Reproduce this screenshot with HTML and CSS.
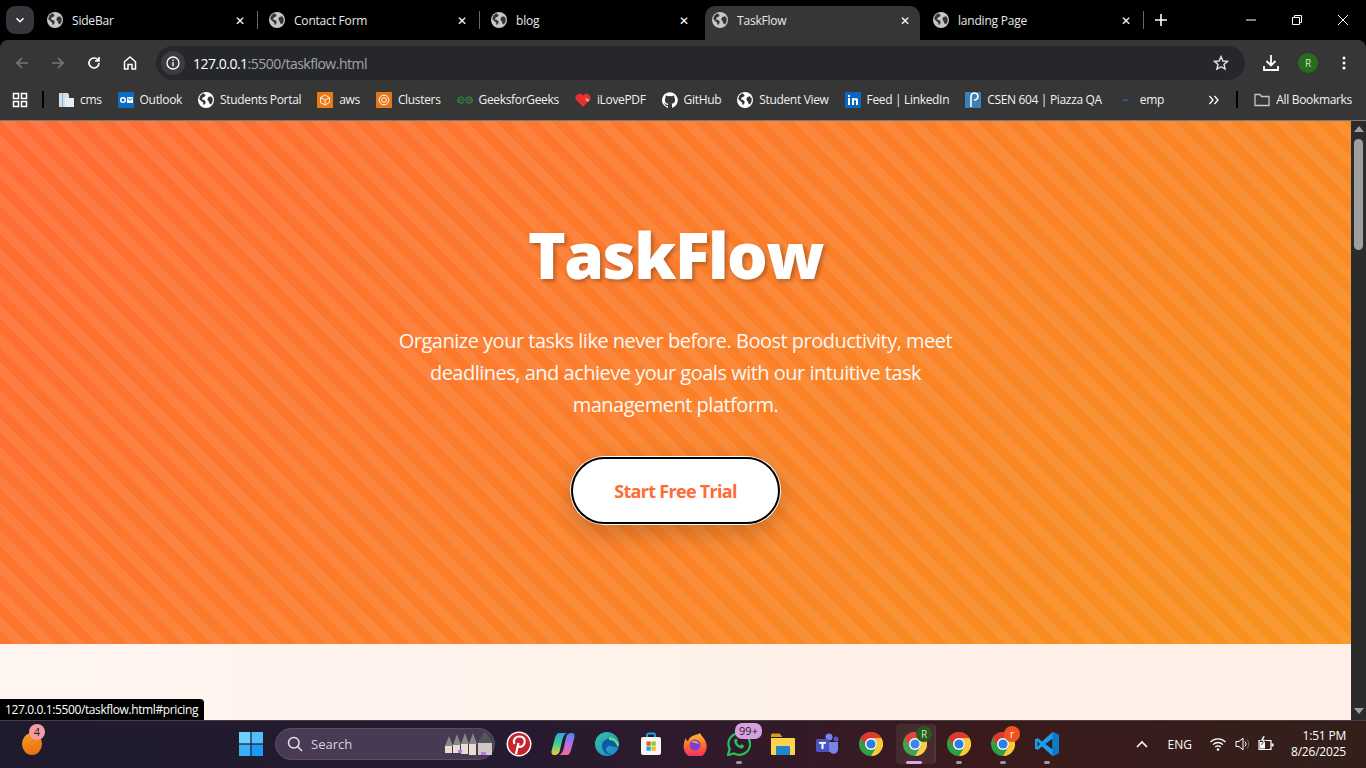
FILE: index.html
```html
<!DOCTYPE html>
<html lang="en">
<head>
    <meta charset="UTF-8">
    <meta name="viewport" content="width=device-width, initial-scale=1.0">
    <title>TaskFlow</title>
    <link rel="stylesheet" href="styles.css">
</head>
<body>
    <svg class="defs" width="0" height="0">
        <symbol id="globe" viewBox="0 0 16 16">
            <circle cx="8" cy="8" r="8" fill="currentColor"/>
            <path d="M5.2 1.3 7.6 3 7 4.6 4.7 5.6 4 7.6 6 8 7.6 9.2 7.4 11.4 5.8 13.2 5 10.6 2.6 8.6 1.2 6.8 2.4 3.4z" fill="#35363a"/>
            <path d="M10.4 5 13 4.2 14.7 6.6 14.6 9.6 13 12.4 11.4 11.6 10.6 9.2 9.2 7.4z" fill="#35363a"/>
        </symbol>
        <symbol id="chrome" viewBox="0 0 24 24">
            <circle cx="12" cy="12" r="12" fill="#2f9e48"/>
            <path d="M22.4 6A12 12 0 0 1 12 24l5-8.6A6 6 0 0 0 12 6z" fill="#fcc934"/>
            <path d="M1.6 6A12 12 0 0 1 22.4 6H12a6 6 0 0 0-5.2 9z" fill="#e0382f"/>
            <circle cx="12" cy="12" r="6" fill="#fff"/>
            <circle cx="12" cy="12" r="4.6" fill="#2f7ee8"/>
        </symbol>
    </svg>

    <!-- tab strip -->
    <div class="tabstrip">
        <div class="tab-search">
            <svg width="10" height="10" viewBox="0 0 10 10"><path d="M1.5 3.2 5 6.7l3.5-3.5" fill="none" stroke="#fff" stroke-width="1.6"/></svg>
        </div>
        <div class="tab"><svg class="fav"><use href="#globe"/></svg><span class="tab-title">SideBar</span><span class="tab-x">✕</span></div>
        <i class="tab-sep"></i>
        <div class="tab"><svg class="fav"><use href="#globe"/></svg><span class="tab-title">Contact Form</span><span class="tab-x">✕</span></div>
        <i class="tab-sep"></i>
        <div class="tab"><svg class="fav"><use href="#globe"/></svg><span class="tab-title">blog</span><span class="tab-x">✕</span></div>
        <div class="tab active"><svg class="fav"><use href="#globe"/></svg><span class="tab-title">TaskFlow</span><span class="tab-x">✕</span></div>
        <div class="tab last"><svg class="fav"><use href="#globe"/></svg><span class="tab-title">landing Page</span><span class="tab-x">✕</span></div>
        <i class="tab-sep"></i>
        <svg class="newtab" width="12" height="12" viewBox="0 0 12 12"><path d="M6 0v12M0 6h12" stroke="#fff" stroke-width="1.6"/></svg>
        <div class="win-controls">
            <svg width="12" height="12" viewBox="0 0 12 12"><path d="M1 6h10" stroke="#fff"/></svg>
            <svg width="12" height="12" viewBox="0 0 12 12"><path d="M1.5 3.5h7v7h-7zM3.5 3.5v-2h7v7h-2" fill="none" stroke="#fff"/></svg>
            <svg width="12" height="12" viewBox="0 0 12 12"><path d="M1 1l10 10M11 1 1 11" stroke="#fff"/></svg>
        </div>
    </div>

    <!-- toolbar -->
    <div class="toolbar">
        <svg class="tool" viewBox="0 0 16 16"><path d="M14 8H3M8 3 3 8l5 5" fill="none" stroke="#77797c" stroke-width="1.6"/></svg>
        <svg class="tool" viewBox="0 0 16 16"><path d="M2 8h11M8 3l5 5-5 5" fill="none" stroke="#77797c" stroke-width="1.6"/></svg>
        <svg class="tool" viewBox="0 0 16 16"><path d="M13 8a5 5 0 1 1-1.5-3.6L13 6M13 2v4H9" fill="none" stroke="#fff" stroke-width="1.6"/></svg>
        <svg class="tool" viewBox="0 0 16 16"><path d="M2.5 14V6.8L8 2l5.5 4.8V14H10V9.5H6V14z" fill="none" stroke="#fff" stroke-width="1.5"/></svg>
        <div class="omnibox">
            <span class="site-info"><svg width="14" height="14" viewBox="0 0 14 14"><circle cx="7" cy="7" r="6" fill="none" stroke="#fff" stroke-width="1.3"/><path d="M7 6v4.2M7 3.6v1.3" stroke="#fff" stroke-width="1.3"/></svg></span>
            <span class="url"><b>127.0.0.1</b>:5500/taskflow.html</span>
            <svg class="star" width="16" height="16" viewBox="0 0 16 16"><path d="M8 1.6 9.9 6l4.7.4-3.6 3.1 1.100 4.600L8 11.700l-4.100 2.400L5 9.500 1.400 6.400 6.100 6z" fill="none" stroke="#e3e3e3" stroke-width="1.4"/></svg>
        </div>
        <svg class="tool dl" viewBox="0 0 18 18"><path d="M9 1v10M4.500 7 9 11.500 13.500 7M2 12v4h14v-4" fill="none" stroke="#fff" stroke-width="1.8"/></svg>
        <span class="avatar">R</span>
        <svg class="tool menu" viewBox="0 0 16 16"><circle cx="8" cy="3" r="1.5" fill="#fff"/><circle cx="8" cy="8" r="1.5" fill="#fff"/><circle cx="8" cy="13" r="1.5" fill="#fff"/></svg>
    </div>

    <!-- bookmarks bar -->
    <div class="bookmarks">
        <svg class="apps" width="16" height="16" viewBox="0 0 16 16"><path d="M1.5 1.5h5v5h-5zM9.500 1.500h5v5h-5zM1.500 9.500h5v5h-5zM9.500 9.500h5v5h-5z" fill="none" stroke="#fff" stroke-width="1.5"/></svg>
        <i class="bm-sep"></i>
        <a class="bm"><svg class="bm-icon" viewBox="0 0 16 16"><path d="M1 1h9l1 2v12H1z" fill="#cfe0ef"/><path d="M4 1h1v14H4z" fill="#8fb0cf"/><path d="M7 6h9v9H7z" fill="#e9edf0"/></svg>cms</a>
        <a class="bm"><svg class="bm-icon" viewBox="0 0 16 16"><path d="M0 0h16v16H0z" fill="#0f6cc6"/><circle cx="5" cy="8" r="2.3" fill="none" stroke="#fff" stroke-width="1.5"/><path d="M9 5h6v6H9z" fill="#fff"/><path d="M9.500 6 12 8.200 14.500 6" fill="none" stroke="#0f6cc6"/></svg>Outlook</a>
        <a class="bm"><svg class="bm-icon white"><use href="#globe"/></svg>Students Portal</a>
        <a class="bm"><svg class="bm-icon" viewBox="0 0 16 16"><path d="M0 0h16v16H0z" fill="#ec7a14"/><path d="M8 3l4.500 2.500v5L8 13l-4.500-2.500v-5zM3.500 5.500 8 8l4.500-2.500M8 8v5" fill="none" stroke="#fff" stroke-width=".9"/></svg>aws</a>
        <a class="bm"><svg class="bm-icon" viewBox="0 0 16 16"><path d="M0 0h16v16H0z" fill="#e5761a"/><circle cx="8" cy="8" r="4.8" fill="none" stroke="#fff"/><circle cx="8" cy="8" r="2.4" fill="none" stroke="#fff"/></svg>Clusters</a>
        <a class="bm"><svg class="bm-icon" viewBox="0 0 16 16"><path d="M8 8h7.500a3.500 3.500 0 0 1-6.400 1.500M8 8H.5a3.500 3.500 0 0 0 6.400 1.500M9.100 6.500A3.500 3.500 0 0 1 15 7M6.900 6.500A3.500 3.500 0 0 0 1 7" fill="none" stroke="#2f8d46" stroke-width="1.2"/></svg>GeeksforGeeks</a>
        <a class="bm"><svg class="bm-icon" viewBox="0 0 16 16"><path d="M8 15 1.200 8A4 4 0 0 1 8 3.600 4 4 0 0 1 14.800 8z" fill="#e5322d"/><path d="M10 6l5 2-3 2z" fill="#f4a6a3"/></svg>iLovePDF</a>
        <a class="bm"><svg class="bm-icon" viewBox="0 0 16 16"><path d="M8 .2a8 8 0 0 0-2.500 15.600c.4.1.5-.2.5-.4v-1.400c-2.200.5-2.700-1-2.700-1-.4-.9-.9-1.200-.9-1.200-.7-.5.100-.5.100-.5.800.1 1.200.8 1.200.8.700 1.200 1.900.9 2.300.7.100-.5.300-.9.500-1.100-1.800-.2-3.600-.9-3.600-4 0-.9.300-1.600.8-2.100-.1-.2-.4-1 .1-2.100 0 0 .7-.2 2.200.8a7.600 7.600 0 0 1 4 0c1.500-1 2.200-.8 2.200-.8.400 1.100.2 1.900.1 2.100.5.600.8 1.300.8 2.100 0 3.100-1.900 3.700-3.700 3.900.3.300.6.800.6 1.500v2.200c0 .2.100.5.600.4A8 8 0 0 0 8 .2z" fill="#fff"/></svg>GitHub</a>
        <a class="bm"><svg class="bm-icon white"><use href="#globe"/></svg>Student View</a>
        <a class="bm"><svg class="bm-icon" viewBox="0 0 16 16"><path d="M0 0h16v16H0z" fill="#0a66c2"/><path d="M3 6h2v7H3zM3 3h2v2H3zM7 6h2v1c1-1.500 4-1.500 4 1.500V13h-2V9c0-1.500-2-1.500-2 0v4H7z" fill="#fff"/></svg>Feed | LinkedIn</a>
        <a class="bm"><svg class="bm-icon" viewBox="0 0 16 16"><path d="M0 0h16v16H0z" fill="#3e7fb5"/><path d="M6 15V4.500a3.500 3.500 0 1 1 3 3.400" fill="none" stroke="#fff" stroke-width="1.6"/></svg>CSEN 604 | Piazza QA</a>
        <a class="bm"><svg class="bm-icon" viewBox="0 0 16 16"><path d="M5 7.500h5V9H5z" fill="#1f5fa8"/></svg>emp</a>
        <svg class="more" width="12" height="12" viewBox="0 0 12 12"><path d="M1.500 2 5 6 1.500 10M6.500 2 10 6l-3.500 4" fill="none" stroke="#fff" stroke-width="1.3"/></svg>
        <i class="bm-sep end"></i>
        <a class="bm all"><svg class="bm-icon" viewBox="0 0 16 16"><path d="M1 13.500v-11h5l1.500 2h7.500v9z" fill="none" stroke="#c7c7c7" stroke-width="1.3"/></svg>All Bookmarks</a>
    </div>

    <!-- page + scrollbar -->
    <div class="viewport">
        <main class="page">
            <section class="hero">
                <h1>TaskFlow</h1>
                <p>Organize your tasks like never before. Boost productivity, meet deadlines, and achieve your goals with our intuitive task management platform.</p>
                <a class="cta">Start Free Trial</a>
            </section>
            <section class="next-section"></section>
        </main>
        <div class="scrollbar">
            <i class="arrow up"></i>
            <div class="thumb"></div>
            <i class="arrow down"></i>
        </div>
        <div class="status-bubble">127.0.0.1:5500/taskflow.html#pricing</div>
    </div>

    <!-- windows taskbar -->
    <footer class="taskbar">
        <div class="tb-left">
            <span class="weather"><span class="weather-badge">4</span></span>
        </div>
        <div class="slot start">
            <svg width="24" height="24" viewBox="0 0 24 24"><path d="M0 0h11.400v11.400H0z" fill="#6fd0fb"/><path d="M12.600 0H24v11.400H12.600z" fill="#4fc0fa"/><path d="M0 12.600h11.400V24H0z" fill="#38b0f8"/><path d="M12.600 12.600H24V24H12.600z" fill="#1b9bf5"/></svg>
        </div>
        <div class="search">
            <svg width="16" height="16" viewBox="0 0 16 16"><circle cx="6.800" cy="6.800" r="5.300" fill="none" stroke="#e6e3ea" stroke-width="1.5"/><path d="M10.800 10.800 15 15" stroke="#e6e3ea" stroke-width="1.5"/></svg>
            <span>Search</span>
            <svg class="search-art" width="50" height="30" viewBox="0 0 50 30">
                <path d="M1 17h7v7H1zM9 16h7v8H9zM17 15h7v10h-7zM25 15h7v11h-7z" fill="#e7ddd3"/>
                <path d="M34 14h14v12H34z" fill="#cfc8c4"/>
                <path d="M1 17 5 7l4 10zM9 16l4-11 4 11zM17 15l4-11 4 11zM25 15l4-11 4 11z" fill="#87878b"/>
                <path d="M33 14l8-12 8 12z" fill="#54555c"/>
                <path d="M37 23h5v3h-5zM14 21h4v3h-4z" fill="#b77be0"/>
            </svg>
        </div>
        <div class="slot">
            <svg width="26" height="26" viewBox="0 0 26 26"><circle cx="13" cy="13" r="12.500" fill="#fff"/><circle cx="13" cy="13" r="11" fill="#c8232c"/><path d="M10 23c.8-4 1.500-7 2.500-11M8.500 13C6.500 8 10 5.500 13.500 5.500c4 0 6 3 5 6.500-1 3.500-4.500 5-6.500 3" fill="none" stroke="#fff" stroke-width="2.2"/></svg>
        </div>
        <div class="slot">
            <svg width="24" height="24" viewBox="0 0 24 24"><defs><linearGradient id="cop1" x1="0" y1="0" x2="0" y2="1"><stop offset="0" stop-color="#2aa5e8"/><stop offset=".5" stop-color="#3fd18b"/><stop offset="1" stop-color="#f7c63e"/></linearGradient><linearGradient id="cop2" x1="0" y1="0" x2="0" y2="1"><stop offset="0" stop-color="#3f8cf0"/><stop offset=".5" stop-color="#b96ce6"/><stop offset="1" stop-color="#f0708a"/></linearGradient></defs><path d="M8 1h8c-3 1-4 4-5 8l-2 9c-.5 2.500-2 5-5 5H3c-2 0-3-2-2.500-4L4 6C5 3 6 1 8 1z" fill="url(#cop1)"/><path d="M16 23H8c3-1 4-4 5-8l2-9c.5-2.500 2-5 5-5h1c2 0 3 2 2.500 4L20 18c-1 3-2 5-4 5z" fill="url(#cop2)"/></svg>
        </div>
        <div class="slot">
            <svg width="24" height="24" viewBox="0 0 24 24"><defs><linearGradient id="edg" x1="0" y1="0" x2="1" y2="1"><stop offset="0" stop-color="#36c6a0"/><stop offset="1" stop-color="#1b7fd0"/></linearGradient></defs><circle cx="12" cy="12" r="12" fill="url(#edg)"/><path d="M24 14c-1-7-8-9-12-7C7 9 6 14 8 18c2 4 7 6 11 4-5 1-8-2-8-5 0-2 2-3 4-3 3 0 6 3 9 0z" fill="#0c5aa6"/><path d="M14 8c4 0 7 2 8 6h2C24 9 19 5 14 5z" fill="#5fe07a"/></svg>
        </div>
        <div class="slot">
            <svg width="24" height="24" viewBox="0 0 24 24"><path d="M8 6V3a1.500 1.500 0 0 1 1.500-1.500h5A1.500 1.500 0 0 1 16 3v3" fill="none" stroke="#1fa6e8" stroke-width="1.8"/><rect x="2" y="5" width="20" height="18" rx="2" fill="#f5f5f5"/><path d="M7.500 9.500h4.200v4.200H7.500z" fill="#f1511b"/><path d="M12.500 9.500h4.200v4.200h-4.200z" fill="#80cc28"/><path d="M7.500 14.500h4.200v4.200H7.500z" fill="#00adef"/><path d="M12.500 14.500h4.200v4.200h-4.200z" fill="#fbbc09"/></svg>
        </div>
        <div class="slot">
            <svg width="24" height="24" viewBox="0 0 24 24"><defs><linearGradient id="ff" x1="0" y1="0" x2="0" y2="1"><stop offset="0" stop-color="#ffc02e"/><stop offset=".5" stop-color="#ff6a2c"/><stop offset="1" stop-color="#f0246a"/></linearGradient></defs><path d="M17 1c1 3 5 5 6 10a11.500 11.500 0 1 1-22 1c0-2 1-5 2-6 0 2 1 3 2 3 1-3 3-5 7-6 2-.5 4-1 5-2z" fill="url(#ff)"/><circle cx="12" cy="13" r="5.5" fill="#7b3fd6"/><path d="M8 10c3-2 7-1 8 2-2-1-5-1-8-2z" fill="#ffb02e"/></svg>
        </div>
        <div class="slot dot">
            <svg width="24" height="24" viewBox="0 0 24 24"><path d="M1 23l1.700-6A10.800 10.800 0 1 1 7 21.400z" fill="none" stroke="#25c15a" stroke-width="2.2"/><path d="M8 7c-2 2 0 6 3 8 2 1.500 4 2 5.500.5l.5-2-2.500-1.200-1.200 1.200c-1.500-.5-3-2-3.500-3.500l1-1.200L9.500 6.500z" fill="#25c15a"/></svg>
            <span class="tb-badge">99+</span>
        </div>
        <div class="slot">
            <svg width="26" height="24" viewBox="0 0 26 24"><path d="M1 3a1.500 1.500 0 0 1 1.500-1.500h7l3 3.500H1z" fill="#d8a21a"/><path d="M1 6h23a1 1 0 0 1 1 1v15a1 1 0 0 1-1 1H2a1 1 0 0 1-1-1z" fill="#fbd34d"/><path d="M7 14h12a1 1 0 0 1 1 1v8H6v-8a1 1 0 0 1 1-1z" fill="#1f86cc"/></svg>
        </div>
        <div class="slot">
            <svg width="24" height="24" viewBox="0 0 24 24"><circle cx="14" cy="5" r="3.500" fill="#7b83eb"/><circle cx="21" cy="7" r="2.500" fill="#5059c9"/><path d="M11 10h12v7a4.500 4.500 0 0 1-8 3 6 6 0 0 1-4-4z" fill="#7b83eb"/><rect x="1" y="7" width="13" height="13" rx="1.500" fill="#4b53bc"/><path d="M4 10h7v1.800H8.500V17h-2v-5.200H4z" fill="#fff"/></svg>
        </div>
        <div class="slot"><svg class="chrome"><use href="#chrome"/></svg></div>
        <div class="slot dot active">
            <svg class="chrome"><use href="#chrome"/></svg>
            <span class="tb-avatar">R</span>
        </div>
        <div class="slot dot"><svg class="chrome"><use href="#chrome"/></svg></div>
        <div class="slot dot">
            <svg class="chrome"><use href="#chrome"/></svg>
            <span class="tb-avatar orange">r</span>
        </div>
        <div class="slot dot">
            <svg width="24" height="24" viewBox="0 0 24 24"><path d="M17.500 0 24 3v18l-6.500 3L7 14.500 2.500 18 0 16.500V7.500L2.500 6 7 9.500z" fill="#1f9cf0"/><path d="M17.500 6.500v11L10.500 12z" fill="#2b2024"/><path d="M17.500 0 24 3v18l-6.500 3z" fill="#0b7ac8"/><path d="M2.500 9 5 12l-2.500 3z" fill="#2b2024"/></svg>
        </div>

        <div class="tray">
            <svg class="tray-up" width="14" height="14" viewBox="0 0 14 14"><path d="M2 10l5-5 5 5" fill="none" stroke="#fff" stroke-width="1.6"/></svg>
            <span class="lang">ENG</span>
            <svg class="wifi" width="16" height="16" viewBox="0 0 16 16"><path d="M.5 6a10.500 10.500 0 0 1 15 0M3 8.600a7 7 0 0 1 10 0M5.300 11a3.700 3.700 0 0 1 5.400 0" fill="none" stroke="#fff" stroke-width="1.3"/><circle cx="8" cy="13.500" r="1.3" fill="#fff"/></svg>
            <svg class="vol" width="16" height="16" viewBox="0 0 16 16"><path d="M1 5.500h3L8 2v12L4 10.500H1z" fill="none" stroke="#fff"/><path d="M10 5.500a3.500 3.500 0 0 1 0 5" fill="none" stroke="#fff"/><path d="M12 3.500a6.500 6.500 0 0 1 0 9" fill="none" stroke="#77706e"/></svg>
            <svg class="batt" width="18" height="16" viewBox="0 0 18 16"><path d="M2 4.500h12v9H2z" fill="none" stroke="#fff" stroke-width="1.2"/><path d="M14.500 7.500h2v3h-2z" fill="#fff"/><path d="M3 6h5v6.500H3z" fill="#fff"/><path d="M6 0 3.500 5H6L4.500 9 9 3.800H6.500L8 0z" fill="#fff" stroke="#35201c" stroke-width=".5"/></svg>
            <div class="clock"><span>1:51 PM</span><span>8/26/2025</span></div>
        </div>
    </footer>
</body>
</html>
```

FILE: styles.css
```css
* {
    box-sizing: border-box;
}
html, body {
    margin: 0;
    height: 768px;
    overflow: hidden;
}
body {
    display: flex;
    flex-direction: column;
    font-family: "Open Sans", "Noto Sans", sans-serif;
    background: #000;
    color: #fff;
}
.defs {
    position: absolute;
}
i {
    display: block;
    flex: none;
}

/* tab strip */
.tabstrip {
    height: 40px;
    flex: none;
    display: flex;
    align-items: flex-start;
    background: #000;
    padding-left: 6px;
}
.tab-search {
    width: 28px;
    height: 28px;
    margin: 6px 3px 0 0;
    border-radius: 9px;
    background: #35363a;
    display: flex;
    align-items: center;
    justify-content: center;
}
.tab {
    width: 220px;
    height: 34px;
    margin-top: 6px;
    flex: none;
    display: flex;
    align-items: center;
    padding: 0 12px 6px 10px;
    font-size: 12px;
    letter-spacing: -0.2px;
    color: #e8e8e8;
    border-radius: 10px 10px 0 0;
}
.tab.active {
    background: #363636;
    width: 215px;
    margin-left: 4px;
    padding-left: 7px;
    padding-right: 10px;
}
.tab.last {
    margin-left: 6px;
    width: 217px;
    padding-left: 7px;
}
.fav {
    width: 16px;
    height: 16px;
    flex: none;
    color: #c7c7c7;
    margin-right: 9px;
}
.tab-title {
    flex: 1;
}
.tab-x {
    font-size: 12px;
    color: #fff;
}
.tab-sep {
    width: 1px;
    height: 18px;
    margin: 11px 1px 0 0;
    background: #666;
}
.newtab {
    margin: 14px 0 0 10px;
}
.win-controls {
    margin: 14px 17px 0 auto;
    display: flex;
    gap: 34px;
}

/* toolbar */
.toolbar {
    height: 40px;
    flex: none;
    background: #363636;
    border-radius: 8px 8px 0 0;
    display: flex;
    align-items: center;
    padding: 6px 0 0 14px;
}
.tool {
    width: 16px;
    height: 16px;
    flex: none;
    margin-right: 20px;
}
.omnibox {
    width: 1089px;
    height: 34px;
    margin: 0 0 0 -2px;
    flex: none;
    background: #26272a;
    border-radius: 17px;
    display: flex;
    align-items: center;
    padding: 0 16px 0 5px;
    font-size: 14px;
}
.site-info {
    width: 24px;
    height: 24px;
    border-radius: 50%;
    background: #3b3c3f;
    display: flex;
    align-items: center;
    justify-content: center;
    margin-right: 8px;
}
.url {
    flex: 1;
    color: #a3a5a8;
    letter-spacing: -0.5px;
}
.url b {
    color: #fff;
    font-weight: 400;
}
.dl {
    width: 18px;
    height: 18px;
    margin: 0 0 0 17px;
}
.avatar {
    width: 20px;
    height: 20px;
    margin-left: 18px;
    flex: none;
    border-radius: 50%;
    background: #2a6b1c;
    color: #cfe6c4;
    font-size: 10px;
    display: flex;
    align-items: center;
    justify-content: center;
}
.menu {
    margin: 0 0 0 18px;
}

/* bookmarks */
.bookmarks {
    height: 41px;
    flex: none;
    background: #363636;
    border-bottom: 1px solid #7a7a7a;
    display: flex;
    align-items: center;
    padding: 0 0 1px 12px;
    font-size: 12px;
    letter-spacing: -0.33px;
}
.apps {
    flex: none;
    margin-right: 14px;
}
.bm-sep {
    width: 2px;
    height: 17px;
    background: #000;
    margin-right: 14px;
}
.bm-sep.end {
    margin-right: 16px;
}
.bm {
    display: flex;
    align-items: center;
    gap: 6px;
    margin-right: 16px;
    white-space: nowrap;
    color: #f1f1f1;
}
.bm-icon {
    width: 16px;
    height: 16px;
    flex: none;
}
.bm-icon.white {
    color: #fff;
}
.more {
    flex: none;
    margin: 0 16px 0 auto;
}
.bm.all {
    margin-right: 14px;
}

/* viewport */
.viewport {
    position: relative;
    height: 599px;
    flex: none;
    display: flex;
}
.page {
    flex: 1;
    display: flex;
    flex-direction: column;
    min-width: 0;
}
.hero {
    height: 523px;
    flex: none;
    display: flex;
    flex-direction: column;
    align-items: center;
    padding-top: 92px;
    background:
        repeating-linear-gradient(45deg, transparent, transparent 10px, rgba(255,255,255,0.08) 10px, rgba(255,255,255,0.08) 20px),
        linear-gradient(135deg, #ff6b35, #f7931e);
}
.hero h1 {
    margin: 0 0 28px;
    font-size: 64px;
    line-height: 84px;
    font-weight: 800;
    letter-spacing: -1.5px;
    color: #fff;
    text-shadow: 2px 2px 4px rgba(0,0,0,0.3);
}
.hero p {
    margin: 0 0 36px;
    width: 600px;
    font-size: 20px;
    line-height: 32px;
    letter-spacing: -0.5px;
    text-align: center;
    color: #fff;
    opacity: 0.95;
}
.cta {
    width: 209px;
    height: 67px;
    border: 2px solid #000;
    border-radius: 34px;
    background: #fff;
    color: #ff6b35;
    font-size: 18px;
    font-weight: 700;
    letter-spacing: -0.7px;
    display: flex;
    align-items: center;
    justify-content: center;
    box-shadow: 0 0 0 1px #fff, 0 8px 25px rgba(0,0,0,0.2);
}
.next-section {
    flex: 1;
    background: linear-gradient(90deg, #fff5f0, #ffefe6);
}
.scrollbar {
    width: 15px;
    flex: none;
    background: #2b2b2b;
    display: flex;
    flex-direction: column;
    align-items: center;
    padding: 5px 0 6px;
}
.arrow {
    width: 0;
    height: 0;
    border-left: 5px solid transparent;
    border-right: 5px solid transparent;
}
.arrow.up {
    border-bottom: 6px solid #9e9e9e;
}
.arrow.down {
    border-top: 6px solid #9e9e9e;
    margin-top: auto;
}
.thumb {
    width: 9px;
    height: 111px;
    margin-top: 7px;
    border-radius: 5px;
    background: #9f9f9f;
}
.status-bubble {
    position: absolute;
    left: 0;
    bottom: 0;
    height: 21px;
    padding: 0 6px 0 5px;
    background: #000;
    color: #fff;
    font-size: 12px;
    letter-spacing: -0.38px;
    line-height: 21px;
    border-top-right-radius: 4px;
}

/* taskbar */
.taskbar {
    height: 48px;
    flex: none;
    border-top: 1px solid #4a3f47;
    background: linear-gradient(90deg, #1e1b2c 0%, #261a30 38%, #321a2a 55%, #3a1a1c 72%, #33201a 100%);
    display: flex;
    align-items: center;
    padding-bottom: 1px;
    font-size: 13px;
}
.tb-left {
    width: 229px;
    flex: none;
    padding-left: 22px;
}
.weather {
    position: relative;
    display: block;
    width: 20px;
    height: 22px;
    border-radius: 50%;
    background: linear-gradient(160deg, #f0a01e, #ea6a12);
}
.weather-badge {
    position: absolute;
    top: -9px;
    left: 7px;
    width: 16px;
    height: 16px;
    border-radius: 50%;
    background: #f79aa6;
    color: #222;
    font-size: 11px;
    text-align: center;
    line-height: 16px;
}
.slot {
    position: relative;
    width: 44px;
    height: 46px;
    flex: none;
    display: flex;
    align-items: center;
    justify-content: center;
}
.chrome {
    width: 24px;
    height: 24px;
}
.slot.dot::after {
    content: "";
    position: absolute;
    left: 19px;
    bottom: 3px;
    width: 6px;
    height: 3px;
    border-radius: 2px;
    background: #9a9a9a;
}
.slot.active::before {
    content: "";
    position: absolute;
    left: 3px;
    top: 3px;
    width: 38px;
    height: 40px;
    border-radius: 4px;
    background: rgba(255,255,255,0.07);
    border-right: 2px solid rgba(255,255,255,0.06);
}
.slot.active::after {
    left: 13px;
    width: 16px;
    background: #dca6e6;
}
.tb-badge {
    position: absolute;
    top: 2px;
    left: 18px;
    width: 27px;
    height: 16px;
    border-radius: 7px;
    background: #d7a0e0;
    color: #222;
    font-size: 11px;
    text-align: center;
    line-height: 16px;
}
.tb-avatar {
    position: absolute;
    top: 5px;
    left: 23px;
    width: 16px;
    height: 16px;
    border-radius: 50%;
    background: #2a5a1e;
    color: #cfe6c4;
    font-size: 10px;
    text-align: center;
    line-height: 16px;
}
.tb-avatar.orange {
    background: #f0531f;
    color: #fff;
}
.search {
    width: 220px;
    height: 32px;
    margin-left: 2px;
    margin-right: 2px;
    flex: none;
    border-radius: 16px;
    border: 1px solid #5b4d64;
    background: #483a52;
    color: #d8d3dc;
    display: flex;
    align-items: center;
    padding-left: 11px;
    gap: 8px;
}
.search-art {
    margin-left: auto;
}
.tray {
    margin-left: auto;
    display: flex;
    align-items: center;
    padding-right: 20px;
    flex: none;
}
.tray-up {
    margin-right: 19px;
}
.lang {
    font-size: 12px;
    margin-right: 18px;
}
.wifi {
    margin-right: 9px;
}
.vol {
    margin-right: 6px;
}
.batt {
    margin-right: 16px;
}
.clock {
    display: flex;
    flex-direction: column;
    align-items: flex-end;
    font-size: 12px;
    line-height: 16px;
    letter-spacing: -0.2px;
}
```
